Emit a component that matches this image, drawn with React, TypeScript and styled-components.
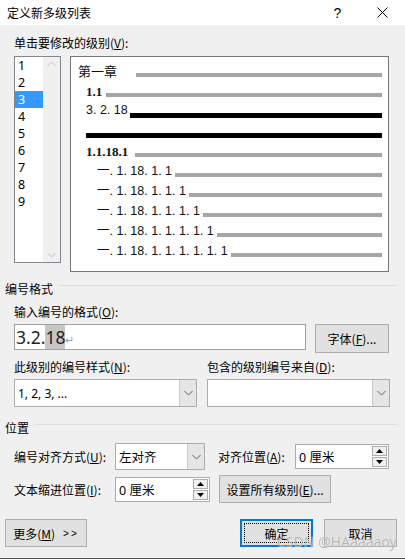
import React from "react";
import styled, { createGlobalStyle } from "styled-components";

const GlobalStyle = createGlobalStyle`
    body {
        margin: 0;
        background: #f0f0f0;
        font-family: "Noto Sans CJK SC", "Noto Sans", sans-serif;
        font-size: 12px;
        color: #000;
    }
`;

const Window = styled.div`
    width: 405px;
    height: 559px;
    background: #f0f0f0;
    position: relative;
    overflow: hidden;
    box-sizing: border-box;
    border-bottom: 1px solid #555;
`;

const TitleBar = styled.div`
    height: 25px;
    background: #fff;
    display: flex;
    align-items: center;
    padding-left: 7px;
    font-size: 12px;
`;

const TitleButtons = styled.div`
    margin-left: auto;
    display: flex;
    height: 100%;
`;

const TitleButton = styled.div`
    width: 45px;
    display: flex;
    align-items: center;
    justify-content: center;
    font-family: "Liberation Sans", sans-serif;
    font-size: 14px;
`;

const Body = styled.div`
    padding: 10px 8px 0 5px;
`;

const Label = styled.div<{ $indent?: number }>`
    height: 16px;
    line-height: 16px;
    padding-left: ${(p) => p.$indent ?? 9}px;
    white-space: nowrap;
`;

const ListRow = styled.div`
    display: flex;
    align-items: flex-start;
    margin: 5px 0 0 9px;
`;

const ListBox = styled.div`
    width: 47px;
    height: 207px;
    box-sizing: border-box;
    border: 1px solid #828790;
    background: #fff;
    display: flex;
`;

const ListItems = styled.div`
    flex: 1;
`;

const ListItem = styled.div<{ $selected?: boolean }>`
    height: 17px;
    line-height: 17px;
    padding-left: 3px;
    font-family: "Noto Sans", sans-serif;
    font-size: 12.5px;
    background: ${(p) => (p.$selected ? "#3399ff" : "transparent")};
    color: ${(p) => (p.$selected ? "#fff" : "#000")};
`;

const ScrollTrack = styled.div`
    width: 17px;
    background: #f0f0f0;
    display: flex;
    flex-direction: column;
    justify-content: space-between;
    align-items: center;
    padding: 4px 0;
`;

const Preview = styled.div`
    margin-left: 9px;
    width: 319px;
    height: 216px;
    box-sizing: border-box;
    border: 1px solid #767676;
    background: #fff;
    padding: 4px 6px 0 0;
`;

const PreviewRow = styled.div<{ $h: number; $top: number; $indent: number }>`
    display: flex;
    align-items: flex-end;
    height: ${(p) => p.$h}px;
    margin-top: ${(p) => p.$top}px;
    padding-left: ${(p) => p.$indent}px;
`;

const PreviewText = styled.span<{ $w: number; $h: number; $kind: "cjk" | "serif" | "sans" }>`
    width: ${(p) => p.$w}px;
    flex: none;
    height: ${(p) => p.$h}px;
    line-height: ${(p) => p.$h}px;
    white-space: nowrap;
    overflow: visible;
    font-family: ${(p) =>
        p.$kind === "serif"
            ? `"Liberation Serif", serif`
            : p.$kind === "cjk"
            ? `"Noto Sans CJK SC", sans-serif`
            : `"Liberation Sans", "Noto Sans CJK SC", sans-serif`};
    font-weight: ${(p) => (p.$kind === "serif" ? 700 : 400)};
    font-size: ${(p) => (p.$kind === "cjk" ? 13 : p.$kind === "serif" ? 13 : 12.5)}px;
    color: #111;
`;

const PreviewLine = styled.div<{ $thick: number; $dark?: boolean; $bottom: number }>`
    flex: 1;
    height: ${(p) => p.$thick}px;
    margin-bottom: ${(p) => p.$bottom}px;
    background: ${(p) => (p.$dark ? "#000" : "#a6a6a6")};
`;

const FullLine = styled.div`
    margin: 14px 0 0 15px;
    height: 5px;
    background: #000;
`;

const GroupHeader = styled.div<{ $top: number }>`
    display: flex;
    align-items: center;
    height: 16px;
    margin-top: ${(p) => p.$top}px;
`;

const GroupRule = styled.div`
    flex: 1;
    height: 1px;
    margin: -6px 0 0 6px;
    background: #dcdcdc;
`;

const Spaced = styled.div<{ $top: number }>`
    margin-top: ${(p) => p.$top}px;
`;

const InputRow = styled.div`
    display: flex;
    align-items: flex-start;
    margin: 4px 0 0 9px;
`;

const FormatInput = styled.div`
    width: 292px;
    height: 26px;
    box-sizing: border-box;
    border: 1px solid #a0a0a0;
    background: #fff;
    display: flex;
    align-items: center;
    padding-left: 1px;
    font-family: "Noto Sans", sans-serif;
    font-size: 17.5px;
    color: #222;
`;

const Highlight = styled.span`
    background: #c6c6c6;
`;

const ReturnMark = styled.span`
    color: #a0a0a0;
    font-size: 11px;
    margin-top: 4px;
`;

const Button = styled.div<{ $w: number; $h?: number; $default?: boolean }>`
    width: ${(p) => p.$w}px;
    height: ${(p) => p.$h ?? 28}px;
    box-sizing: border-box;
    border: ${(p) => (p.$default ? "2px solid #0078d7" : "1px solid #adadad")};
    background: #e1e1e1;
    display: flex;
    align-items: center;
    justify-content: center;
    white-space: nowrap;
    position: relative;
`;

const FocusRing = styled.div`
    position: absolute;
    inset: 2px;
    border: 1px dotted #000;
`;

const Arrows = styled.span`
    font-family: "Liberation Sans", sans-serif;
    font-size: 10px;
    letter-spacing: 2px;
    margin-left: 8px;
`;

const TwoCols = styled.div`
    display: flex;
    gap: 10px;
    margin: 6px 0 0 9px;
`;

const Col = styled.div`
    display: flex;
    flex-direction: column;
    gap: 4px;
`;

const Select = styled.div<{ $w: number; $h: number }>`
    width: ${(p) => p.$w}px;
    height: ${(p) => p.$h}px;
    box-sizing: border-box;
    border: 1px solid #adadad;
    background: #fff;
    display: flex;
    align-items: stretch;
`;

const SelectValue = styled.div<{ $size?: number }>`
    flex: 1;
    display: flex;
    align-items: center;
    padding-left: 3px;
    font-size: ${(p) => p.$size ?? 12}px;
    font-family: "Noto Sans", "Noto Sans CJK SC", sans-serif;
`;

const SelectArrow = styled.div`
    width: 16px;
    background: #e5e5e5;
    border-left: 1px solid #c8c8c8;
    display: flex;
    align-items: center;
    justify-content: center;
`;

const SpinBox = styled.div<{ $w: number; $h: number }>`
    width: ${(p) => p.$w}px;
    height: ${(p) => p.$h}px;
    box-sizing: border-box;
    border: 1px solid #adadad;
    background: #fff;
    display: flex;
    align-items: stretch;
    padding: 1px;
`;

const SpinValue = styled.div`
    flex: 1;
    display: flex;
    align-items: center;
    padding-left: 2px;
    font-size: 12.5px;
    font-family: "Noto Sans", "Noto Sans CJK SC", sans-serif;
`;

const SpinButtons = styled.div`
    width: 15px;
    display: flex;
    flex-direction: column;
    gap: 1px;
`;

const SpinButton = styled.div`
    flex: 1;
    border: 1px solid #adadad;
    background: #f0f0f0;
    display: flex;
    align-items: center;
    justify-content: center;
`;

const PosRow = styled.div<{ $top: number }>`
    display: flex;
    align-items: center;
    margin: ${(p) => p.$top}px 0 0 9px;
`;

const PosLabel = styled.div<{ $w: number }>`
    width: ${(p) => p.$w}px;
    flex: none;
    white-space: nowrap;
`;

const Gap = styled.div<{ $w: number }>`
    width: ${(p) => p.$w}px;
    flex: none;
`;

const BottomRow = styled.div`
    display: flex;
    align-items: center;
    margin-top: 16px;
    gap: 11px;
`;

const Spacer = styled.div`
    flex: 1;
`;

const Watermark = styled.div`
    position: absolute;
    left: 277px;
    top: 532px;
    font-family: "Noto Sans", sans-serif;
    font-size: 14px;
    color: rgba(140, 140, 140, 0.6);
    text-shadow: 0 0 1px rgba(255, 255, 255, 0.9);
    pointer-events: none;
    white-space: nowrap;
`;

const Chevron = ({ up, color = "#606060" }: { up?: boolean; color?: string }) => (
    <svg width="9" height="6" viewBox="0 0 9 6">
        <path d={up ? "M0.5 5 L4.5 1 L8.5 5" : "M0.5 1 L4.5 5 L8.5 1"} fill="none" stroke={color} strokeWidth="1" />
    </svg>
);

const Triangle = ({ up }: { up?: boolean }) => (
    <svg width="7" height="4" viewBox="0 0 7 4">
        <path d={up ? "M0 4 L3.5 0 L7 4 Z" : "M0 0 L3.5 4 L7 0 Z"} fill="#000" />
    </svg>
);

const Dropdown = ({ w, h, value, size }: { w: number; h: number; value: string; size?: number }) => (
    <Select $w={w} $h={h}>
        <SelectValue $size={size}>{value}</SelectValue>
        <SelectArrow>
            <Chevron />
        </SelectArrow>
    </Select>
);

const Spinner = ({ w, h }: { w: number; h: number }) => (
    <SpinBox $w={w} $h={h}>
        <SpinValue>0 厘米</SpinValue>
        <SpinButtons>
            <SpinButton>
                <Triangle up />
            </SpinButton>
            <SpinButton>
                <Triangle />
            </SpinButton>
        </SpinButtons>
    </SpinBox>
);

const subRows = [
    { text: "一. 1. 18. 1. 1", w: 78 },
    { text: "一. 1. 18. 1. 1. 1", w: 92 },
    { text: "一. 1. 18. 1. 1. 1. 1", w: 106 },
    { text: "一. 1. 18. 1. 1. 1. 1. 1", w: 120 },
    { text: "一. 1. 18. 1. 1. 1. 1. 1. 1", w: 134 },
];

export default function App() {
    return (
        <Window>
            <GlobalStyle />
            <TitleBar>
                定义新多级列表
                <TitleButtons>
                    <TitleButton>?</TitleButton>
                    <TitleButton>
                        <svg width="11" height="11" viewBox="0 0 11 11">
                            <path d="M0.5 0.5 L10.5 10.5 M10.5 0.5 L0.5 10.5" stroke="#000" strokeWidth="1" />
                        </svg>
                    </TitleButton>
                </TitleButtons>
            </TitleBar>

            <Body>
                <Label>
                    单击要修改的级别(<u>V</u>):
                </Label>
                <ListRow>
                    <ListBox>
                        <ListItems>
                            {[1, 2, 3, 4, 5, 6, 7, 8, 9].map((n) => (
                                <ListItem key={n} $selected={n === 3}>
                                    {n}
                                </ListItem>
                            ))}
                        </ListItems>
                        <ScrollTrack>
                            <Chevron up color="#c2c2c2" />
                            <Chevron color="#c2c2c2" />
                        </ScrollTrack>
                    </ListBox>

                    <Preview>
                        <PreviewRow $h={20} $top={0} $indent={7}>
                            <PreviewText $w={58} $h={20} $kind="cjk">第一章</PreviewText>
                            <PreviewLine $thick={4} $bottom={4} />
                        </PreviewRow>
                        <PreviewRow $h={18} $top={2} $indent={15}>
                            <PreviewText $w={20} $h={18} $kind="serif">1.1</PreviewText>
                            <PreviewLine $thick={4} $bottom={4} />
                        </PreviewRow>
                        <PreviewRow $h={18} $top={0} $indent={15}>
                            <PreviewText $w={44} $h={18} $kind="sans">3. 2. 18</PreviewText>
                            <PreviewLine $thick={5} $dark $bottom={1} />
                        </PreviewRow>
                        <FullLine />
                        <PreviewRow $h={18} $top={5} $indent={15}>
                            <PreviewText $w={49} $h={18} $kind="serif">1.1.18.1</PreviewText>
                            <PreviewLine $thick={4} $bottom={4} />
                        </PreviewRow>
                        {subRows.map((r) => (
                            <PreviewRow key={r.text} $h={20} $top={0} $indent={26}>
                                <PreviewText $w={r.w} $h={20} $kind="sans">{r.text}</PreviewText>
                                <PreviewLine $thick={4} $bottom={4} />
                            </PreviewRow>
                        ))}
                    </Preview>
                </ListRow>

                <GroupHeader $top={8}>
                    编号格式
                    <GroupRule />
                </GroupHeader>
                <Spaced $top={8}>
                    <Label>
                        输入编号的格式(<u>O</u>):
                    </Label>
                </Spaced>
                <InputRow>
                    <FormatInput>
                        3.2.<Highlight>18</Highlight>
                        <ReturnMark>↵</ReturnMark>
                    </FormatInput>
                    <Gap $w={9} />
                    <Button $w={74} $h={29}>
                        字体(<u>F</u>)...
                    </Button>
                </InputRow>

                <TwoCols>
                    <Col>
                        <Label $indent={0}>
                            此级别的编号样式(<u>N</u>):
                        </Label>
                        <Dropdown w={183} h={28} value="1, 2, 3, ..." />
                    </Col>
                    <Col>
                        <Label $indent={0}>
                            包含的级别编号来自(<u>D</u>):
                        </Label>
                        <Dropdown w={183} h={28} value="" />
                    </Col>
                </TwoCols>

                <GroupHeader $top={12}>
                    位置
                    <GroupRule />
                </GroupHeader>
                <PosRow $top={8}>
                    <PosLabel $w={101}>
                        编号对齐方式(<u>U</u>):
                    </PosLabel>
                    <Dropdown w={90} h={27} value="左对齐" size={12.5} />
                    <Gap $w={13} />
                    <PosLabel $w={77}>
                        对齐位置(<u>A</u>):
                    </PosLabel>
                    <Spinner w={94} h={25} />
                </PosRow>
                <PosRow $top={5}>
                    <PosLabel $w={101}>
                        文本缩进位置(<u>I</u>):
                    </PosLabel>
                    <Spinner w={95} h={25} />
                    <Gap $w={9} />
                    <Button $w={112}>
                        设置所有级别(<u>E</u>)...
                    </Button>
                </PosRow>

                <BottomRow>
                    <Button $w={82}>
                        更多(<u>M</u>)<Arrows>&gt;&gt;</Arrows>
                    </Button>
                    <Spacer />
                    <Button $w={73} $default>
                        <FocusRing />
                        确定
                    </Button>
                    <Button $w={73}>取消</Button>
                </BottomRow>
            </Body>
            <Watermark>CSDN @HAaaaaoy</Watermark>
        </Window>
    );
}
